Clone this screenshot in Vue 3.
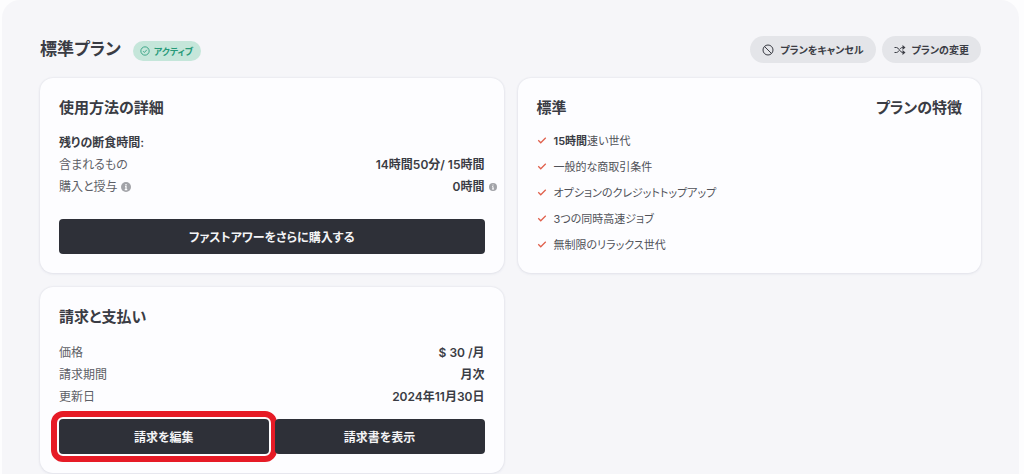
<script setup>
const usage = [
  { label: '含まれるもの', value: '14時間50分/ 15時間' },
  { label: '購入と授与', value: '0時間', info: true },
]
const billing = [
  { label: '価格', value: '$ 30 /月' },
  { label: '請求期間', value: '月次' },
  { label: '更新日', value: '2024年11月30日' },
]
const features = [
  { strong: '15時間', text: '速い世代' },
  { text: '一般的な商取引条件' },
  { text: 'オプションのクレジットトップアップ' },
  { text: '3つの同時高速ジョブ' },
  { text: '無制限のリラックス世代' },
]
</script>

<template>
  <main class="panel">
    <header class="top">
      <h1>標準プラン</h1>
      <span class="badge">
        <svg viewBox="0 0 24 24" width="10" height="10" aria-hidden="true">
          <circle cx="12" cy="12" r="10" /><path d="M7.5 12.5l3 3 6-6.5" />
        </svg>
        アクティブ
      </span>
      <div class="actions">
        <button type="button" class="pill">
          <svg viewBox="0 0 24 24" width="12" height="12" aria-hidden="true">
            <circle cx="12" cy="12" r="10" /><path d="M5 5l14 14" />
          </svg>
          プランをキャンセル
        </button>
        <button type="button" class="pill">
          <svg viewBox="0 0 24 24" width="12" height="12" aria-hidden="true">
            <path d="M1 7h4c5 0 7 10 12 10h2M1 17h4c2 0 3.500-1.500 5-4M12 10C13.500 8 15 7 17 7h2" />
            <path class="solid" d="M17 2l6 5-6 5zM17 12l6 5-6 5z" />
          </svg>
          プランの変更
        </button>
      </div>
    </header>

    <div class="cards">
      <section class="card">
        <h2>使用方法の詳細</h2>
        <h3>残りの断食時間:</h3>
        <dl>
          <div v-for="row in usage" :key="row.label" class="row">
            <dt>
              {{ row.label }}
              <svg v-if="row.info" class="info" viewBox="0 0 16 16" width="10" height="10" aria-hidden="true">
                <circle cx="8" cy="8" r="8" /><path d="M8 3v2M6.500 7H8v5M6 12h4" />
              </svg>
            </dt>
            <dd>
              {{ row.value }}
              <svg v-if="row.info" class="info side" viewBox="0 0 16 16" width="8" height="8" aria-hidden="true">
                <circle cx="8" cy="8" r="8" /><path d="M8 3v2M6.500 7H8v5M6 12h4" />
              </svg>
            </dd>
          </div>
        </dl>
        <div class="buttons spaced">
          <button type="button" class="dark">ファストアワーをさらに購入する</button>
        </div>
      </section>

      <section class="card">
        <div class="heads">
          <h2>標準</h2>
          <h2>プランの特徴</h2>
        </div>
        <ul>
          <li v-for="item in features" :key="item.text">
            <svg viewBox="0 0 16 16" width="10" height="10" aria-hidden="true"><path d="M2 8.500l4 4 8-8" /></svg>
            <span><b v-if="item.strong">{{ item.strong }}</b>{{ item.text }}</span>
          </li>
        </ul>
      </section>

      <section class="card">
        <h2>請求と支払い</h2>
        <dl>
          <div v-for="row in billing" :key="row.label" class="row">
            <dt>{{ row.label }}</dt>
            <dd>{{ row.value }}</dd>
          </div>
        </dl>
        <div class="buttons">
          <button type="button" class="dark marked">請求を編集</button>
          <button type="button" class="dark">請求書を表示</button>
        </div>
      </section>
    </div>
  </main>
</template>

<style>
body {
  background: #fdfdfe;
}
</style>

<style scoped>
.panel {
  margin: 0 5px 0 2px;
  padding: 36px 38px 2px;
  border-radius: 18px 18px 0 0;
  background: #f6f6f9;
  color: #3a3c44;
  font-family: Inter, "Noto Sans CJK JP", sans-serif;
  font-size: 12px;
  font-feature-settings: "palt";
}
h1, h2, h3, dl, dd, ul {
  margin: 0;
  padding: 0;
}
.top {
  display: flex;
  align-items: center;
  height: 27px;
}
h1 {
  font-size: 17px;
  line-height: 27px;
  font-weight: 600;
}
svg {
  flex: none;
  fill: none;
  stroke: currentColor;
  stroke-width: 2;
}
.solid {
  fill: currentColor;
  stroke: none;
}
.badge {
  display: flex;
  align-items: center;
  gap: 4px;
  height: 20px;
  margin: 3px 0 0 12px;
  padding: 0 8px 0 7px;
  border-radius: 10px;
  background: #c5e6da;
  color: #279a79;
  font-size: 9px;
  font-weight: 600;
}
.actions {
  display: flex;
  gap: 6px;
  margin-left: auto;
}
.pill {
  display: flex;
  align-items: center;
  gap: 6px;
  height: 27px;
  padding: 0 12px;
  border: 0;
  border-radius: 14px;
  background: #e4e5e9;
  color: #3a3c44;
  font: inherit;
  font-size: 10px;
  font-weight: 600;
}
.cards {
  display: grid;
  grid-template-columns: 1fr 1fr;
  gap: 14px;
  margin-top: 15px;
}
.card {
  padding: 19px;
  border-radius: 13px;
  background: #fdfdff;
  box-shadow: 0 0 2px #d9dae2, 0 1px 3px #e6e7ee;
}
h2 {
  font-size: 15px;
  line-height: 22px;
  font-weight: 600;
}
h3 {
  margin-top: 13px;
  font-size: 12px;
  line-height: 22px;
  font-weight: 600;
}
h2 + dl {
  margin-top: 14px;
}
.row {
  display: flex;
  justify-content: space-between;
  font-size: 12px;
  line-height: 22px;
}
dt {
  color: #5d5f66;
}
dd {
  position: relative;
  font-weight: 600;
}
.info {
  fill: #a2a3a8;
  stroke: none;
  vertical-align: -1px;
}
.info path {
  stroke: #fdfdff;
}
.side {
  position: absolute;
  left: calc(100% + 4px);
  top: 7px;
}
.buttons {
  display: flex;
  gap: 6px;
  margin-top: 11px;
}
.spaced {
  margin-top: 21px;
}
.dark {
  flex: 1;
  height: 35px;
  border: 0;
  border-radius: 4px;
  background: #2e3038;
  color: #f4f4f6;
  font: inherit;
  font-weight: 600;
}
.marked {
  outline: 6px solid #e61b26;
  outline-offset: 2px;
}
.heads {
  display: flex;
  justify-content: space-between;
}
ul {
  display: grid;
  gap: 8px;
  margin-top: 12px;
  list-style: none;
}
li {
  display: flex;
  align-items: center;
  gap: 7px;
  height: 18px;
  color: #505259;
  font-size: 11px;
}
li svg {
  color: #e0604c;
}
li b {
  color: #3a3c44;
  font-weight: 600;
}
</style>
